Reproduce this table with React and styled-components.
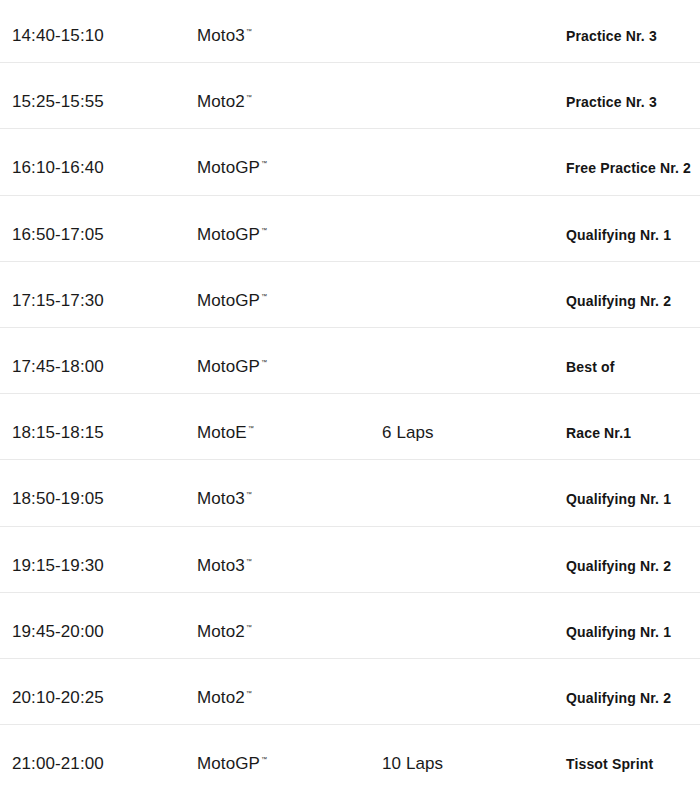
import React from 'react'
import styled, { createGlobalStyle } from 'styled-components'

const Global = createGlobalStyle`
  html, body {
    margin: 0;
    padding: 0;
    background: #ffffff;
  }
  body {
    font-family: "Liberation Sans", Arial, sans-serif;
    color: #1c1c1c;
    overflow: hidden;
  }
`

const Table = styled.div`
  width: 700px;
  margin-top: -3px;
`

const Row = styled.div`
  display: grid;
  grid-template-columns: 185px 185px 184px 1fr;
  align-items: center;
  padding: 29px 0 16.2px 12px;
  line-height: 20px;
  border-bottom: 1px solid ${p => (p.$last ? 'transparent' : '#e9e9e9')};
`

const Cell = styled.div`
  font-size: 17px;
  color: #1a1a1a;
  white-space: nowrap;
  letter-spacing: 0.1px;
`

const Session = styled.div`
  font-size: 14px;
  font-weight: 700;
  color: #151515;
  white-space: nowrap;
  letter-spacing: 0.15px;
`

const Tm = styled.sup`
  font-size: 6px;
  vertical-align: top;
  position: relative;
  top: -5px;
  margin-left: 1px;
`

const schedule = [
  ['14:40-15:10', 'Moto3', '', 'Practice Nr. 3'],
  ['15:25-15:55', 'Moto2', '', 'Practice Nr. 3'],
  ['16:10-16:40', 'MotoGP', '', 'Free Practice Nr. 2'],
  ['16:50-17:05', 'MotoGP', '', 'Qualifying Nr. 1'],
  ['17:15-17:30', 'MotoGP', '', 'Qualifying Nr. 2'],
  ['17:45-18:00', 'MotoGP', '', 'Best of'],
  ['18:15-18:15', 'MotoE', '6 Laps', 'Race Nr.1'],
  ['18:50-19:05', 'Moto3', '', 'Qualifying Nr. 1'],
  ['19:15-19:30', 'Moto3', '', 'Qualifying Nr. 2'],
  ['19:45-20:00', 'Moto2', '', 'Qualifying Nr. 1'],
  ['20:10-20:25', 'Moto2', '', 'Qualifying Nr. 2'],
  ['21:00-21:00', 'MotoGP', '10 Laps', 'Tissot Sprint'],
]

export default function App() {
  return (
    <>
      <Global />
      <Table>
        {schedule.map(([time, cls, laps, session], i) => (
          <Row key={i} $last={i === schedule.length - 1}>
            <Cell>{time}</Cell>
            <Cell>
              {cls}
              <Tm>™</Tm>
            </Cell>
            <Cell>{laps}</Cell>
            <Session>{session}</Session>
          </Row>
        ))}
      </Table>
    </>
  )
}
